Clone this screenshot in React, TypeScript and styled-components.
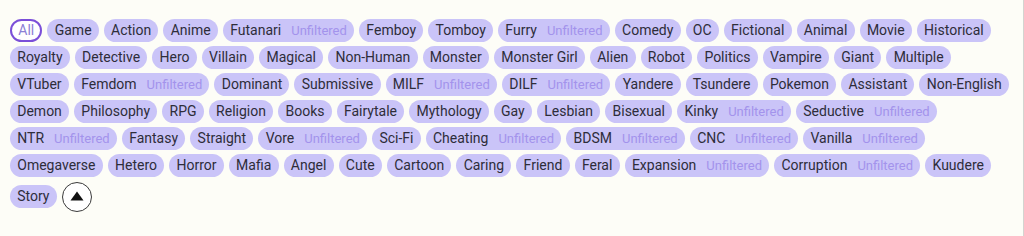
import React from "react";
import styled, { createGlobalStyle } from "styled-components";

const Global = createGlobalStyle`
  html, body { margin: 0; padding: 0; background: #fdfdf7; }
  body { font-family: Roboto, "Noto Sans", Arial, sans-serif; }
`;

const Page = styled.div`
  box-sizing: border-box;
  width: 1024px;
  height: 236px;
  border-right: 1px solid #d4d4d0;
  padding: 18.5px 0 0 10px;
  background: #fdfdf7;
  display: flex;
  flex-direction: column;
  gap: 4.2px;
`;

const TagRow = styled.div`
  display: flex;
  align-items: center;
  gap: 5px;
`;

const Chip = styled.button<{ $active?: boolean }>`
  box-sizing: border-box;
  height: 23px;
  padding: 0 ${(p) => (p.$active ? "6.25px" : "7.25px")};
  border-radius: 12px;
  border: ${(p) => (p.$active ? "2px solid #7b4fd8" : "none")};
  background: ${(p) => (p.$active ? "#ffffff" : "#cac4f8")};
  color: ${(p) => (p.$active ? "#8c80d6" : "#2e2d3a")};
  font-family: Roboto, "Noto Sans", Arial, sans-serif;
  font-size: 14px;
  line-height: 19px;
  display: inline-flex;
  align-items: center;
  white-space: nowrap;
  cursor: pointer;
`;

const Unfiltered = styled.span`
  margin-left: 10px;
  font-size: 13px;
  color: #a393ec;
`;

const ToggleButton = styled.button`
  box-sizing: border-box;
  width: 30px;
  height: 30px;
  border-radius: 50%;
  border: 1px solid #3a3a3a;
  background: #ffffff;
  display: inline-flex;
  align-items: center;
  justify-content: center;
  padding: 0 0 1px 0;
  cursor: pointer;
`;

type Tag = [string, boolean?];

const rows: Tag[][] = [
  [["Game"], ["Action"], ["Anime"], ["Futanari", true], ["Femboy"], ["Tomboy"],
   ["Furry", true], ["Comedy"], ["OC"], ["Fictional"], ["Animal"], ["Movie"], ["Historical"]],
  [["Royalty"], ["Detective"], ["Hero"], ["Villain"], ["Magical"], ["Non-Human"],
   ["Monster"], ["Monster Girl"], ["Alien"], ["Robot"], ["Politics"], ["Vampire"],
   ["Giant"], ["Multiple"]],
  [["VTuber"], ["Femdom", true], ["Dominant"], ["Submissive"], ["MILF", true],
   ["DILF", true], ["Yandere"], ["Tsundere"], ["Pokemon"], ["Assistant"], ["Non-English"]],
  [["Demon"], ["Philosophy"], ["RPG"], ["Religion"], ["Books"], ["Fairytale"],
   ["Mythology"], ["Gay"], ["Lesbian"], ["Bisexual"], ["Kinky", true], ["Seductive", true]],
  [["NTR", true], ["Fantasy"], ["Straight"], ["Vore", true], ["Sci-Fi"],
   ["Cheating", true], ["BDSM", true], ["CNC", true], ["Vanilla", true]],
  [["Omegaverse"], ["Hetero"], ["Horror"], ["Mafia"], ["Angel"], ["Cute"], ["Cartoon"],
   ["Caring"], ["Friend"], ["Feral"], ["Expansion", true], ["Corruption", true], ["Kuudere"]],
  [["Story"]],
];

export default function App() {
  return (
    <>
      <Global />
      <Page>
        {rows.map((row, i) => (
          <TagRow key={i}>
            {i === 0 && <Chip $active>All</Chip>}
            {row.map(([name, unf]) => (
              <Chip key={name}>
                {name}
                {unf && <Unfiltered>Unfiltered</Unfiltered>}
              </Chip>
            ))}
            {i === rows.length - 1 && (
              <ToggleButton aria-label="Collapse">
                <svg width="14" height="10" viewBox="0 0 14 10">
                  <polygon points="7,0.5 13.5,9.5 0.5,9.5" fill="#111" />
                </svg>
              </ToggleButton>
            )}
          </TagRow>
        ))}
      </Page>
    </>
  );
}
